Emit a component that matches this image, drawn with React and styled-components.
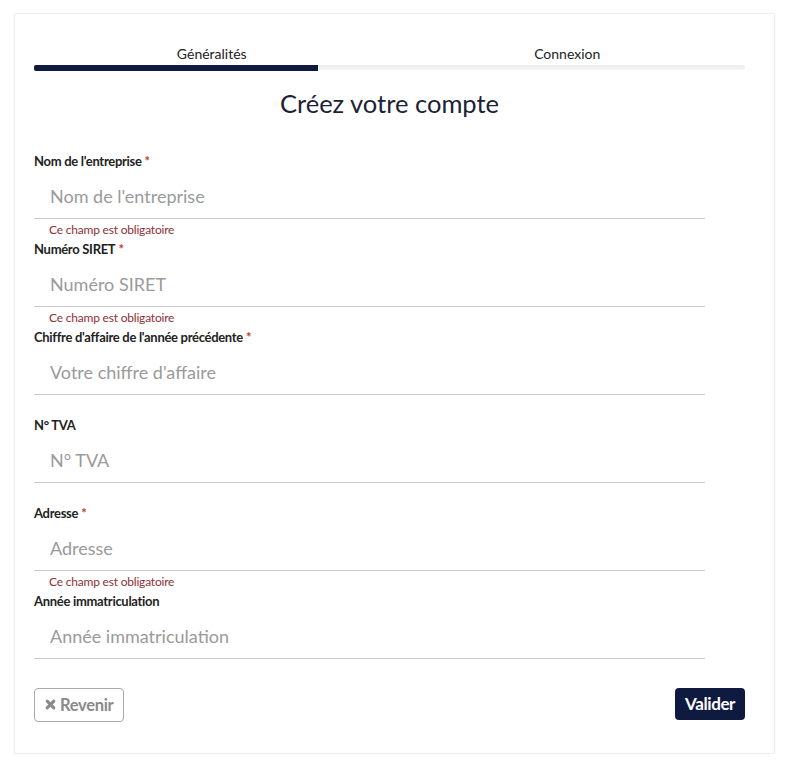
import React from 'react';
import styled, { createGlobalStyle } from 'styled-components';

const GlobalStyle = createGlobalStyle`
  body {
    margin: 0;
    background: #fff;
    font-family: Lato, "Open Sans", sans-serif;
  }
`;

const Page = styled.div`
  padding: 13px 18px 12px 14px;
`;

const Card = styled.div`
  border: 1px solid #eeeeee;
  border-radius: 2px;
  box-shadow: 0 0 3px rgba(0, 0, 0, 0.04);
  padding: 31px 29px 31px 19px;
`;

const Tabs = styled.div`
  display: flex;
`;

const Tab = styled.div`
  flex: 1;
  text-align: center;
  font-size: 14px;
  line-height: 17px;
  color: #222;
  padding-bottom: 2px;
`;

const Track = styled.div`
  height: 5px;
  background: linear-gradient(#ececec, #f6f6f6);
  border-radius: 2px;
  margin-top: 1px;
`;

const Progress = styled.div`
  height: 6px;
  margin-top: -0.5px;
  background: #0e1a40;
  border-radius: 2px 0 0 2px;
`;

const Title = styled.h1`
  margin: 17px 0 0;
  text-align: center;
  font-weight: 400;
  font-size: 25.5px;
  line-height: 32px;
  color: #1b2236;
`;

const Form = styled.form`
  margin-top: 34px;
`;

const Field = styled.div`
  display: flex;
  flex-direction: column;
`;

const Label = styled.label`
  font-size: 13px;
  font-weight: 700;
  line-height: 16px;
  color: #222;
  letter-spacing: -0.3px;
`;

const Star = styled.span`
  color: #c0392b;
  margin-left: 3px;
`;

const Input = styled.input`
  margin-top: 6px;
  width: calc(100% - 40px);
  height: 44px;
  box-sizing: border-box;
  padding: 0 16px;
  border: none;
  border-bottom: 1px solid #cccccc;
  font-family: inherit;
  font-size: 18px;
  color: #333;
  background: transparent;
  outline: none;

  &::placeholder {
    color: #9a9a9a;
  }
`;

const Error = styled.div`
  height: 22px;
  box-sizing: border-box;
  padding: 4px 0 0 15px;
  font-size: 12px;
  line-height: 14px;
  letter-spacing: -0.2px;
  color: ${({ $show }) => ($show ? '#8e2f35' : 'transparent')};
`;

const Actions = styled.div`
  display: flex;
  justify-content: space-between;
  align-items: flex-start;
  margin-top: 7px;
`;

const BackButton = styled.button`
  display: flex;
  align-items: center;
  gap: 4px;
  height: 34px;
  padding: 0 10px;
  border: 1px solid #a9a9a9;
  border-radius: 4px;
  background: #fff;
  color: #8a8a8a;
  font-family: inherit;
  font-weight: 700;
  font-size: 16.5px;
  letter-spacing: -0.3px;
  cursor: pointer;
`;

const SubmitButton = styled.button`
  height: 32px;
  padding: 0 10px;
  border: none;
  border-radius: 4px;
  background: #0e1a40;
  color: #fff;
  font-family: inherit;
  font-weight: 700;
  font-size: 17px;
  letter-spacing: -0.4px;
  cursor: pointer;
`;

const fields = [
  { label: "Nom de l'entreprise", placeholder: "Nom de l'entreprise", required: true, error: true },
  { label: 'Numéro SIRET', placeholder: 'Numéro SIRET', required: true, error: true },
  { label: "Chiffre d'affaire de l'année précédente", placeholder: "Votre chiffre d'affaire", required: true },
  { label: 'N° TVA', placeholder: 'N° TVA' },
  { label: 'Adresse', placeholder: 'Adresse', required: true, error: true },
  { label: 'Année immatriculation', placeholder: 'Année immatriculation' },
];

const CrossIcon = () => (
  <svg width="11" height="11" viewBox="0 0 10 10">
    <path d="M2 2 L8 8 M8 2 L2 8" stroke="#8a8a8a" strokeWidth="2.8" strokeLinecap="round" />
  </svg>
);

const App = () => (
  <Page>
    <GlobalStyle />
    <Card>
      <Tabs>
        <Tab>Généralités</Tab>
        <Tab>Connexion</Tab>
      </Tabs>
      <Track>
        <Progress style={{ width: '40%' }} />
      </Track>
      <Title>Créez votre compte</Title>
      <Form onSubmit={(e) => e.preventDefault()}>
        {fields.map((f) => (
          <Field key={f.label}>
            <Label>
              {f.label}
              {f.required && <Star>*</Star>}
            </Label>
            <Input placeholder={f.placeholder} />
            <Error $show={f.error}>Ce champ est obligatoire</Error>
          </Field>
        ))}
        <Actions>
          <BackButton type="button">
            <CrossIcon />
            Revenir
          </BackButton>
          <SubmitButton type="submit">Valider</SubmitButton>
        </Actions>
      </Form>
    </Card>
  </Page>
);

export default App;
